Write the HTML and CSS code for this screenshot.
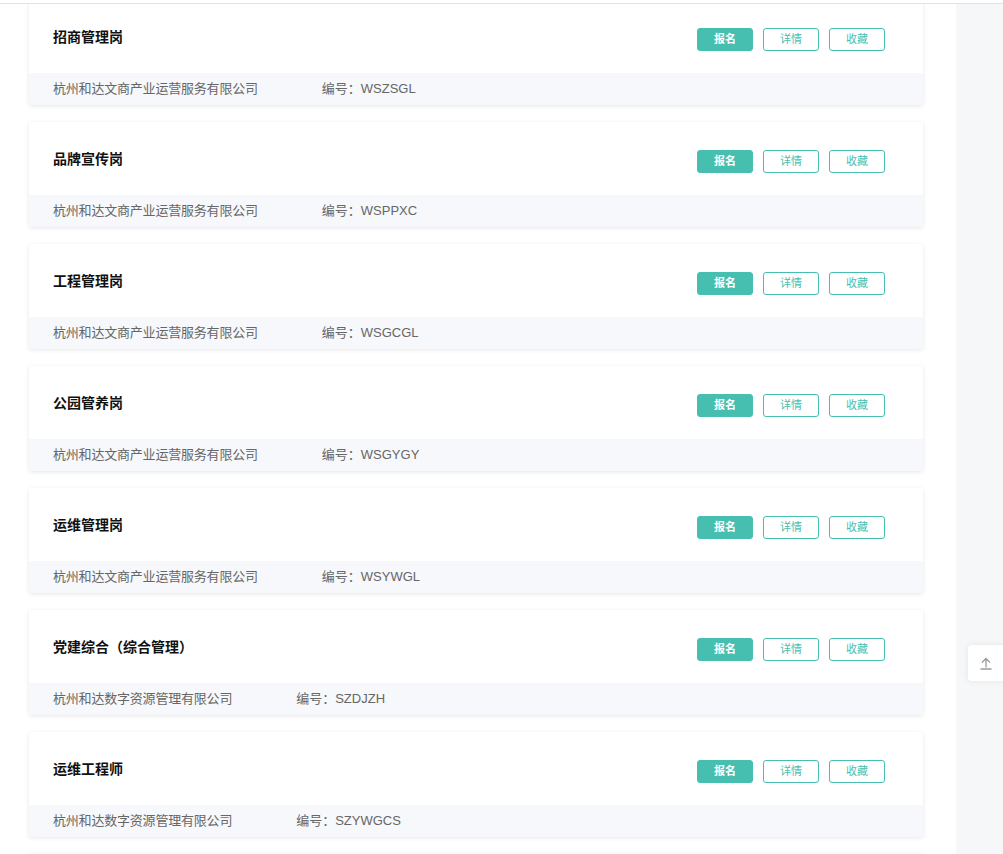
FILE: index.html
```html
<!DOCTYPE html>
<html lang="zh-CN">
<head>
<meta charset="utf-8">
<title>岗位列表</title>
<link rel="stylesheet" href="styles.css">
</head>
<body>
<div class="topbar"></div>
<div class="page">
  <main class="list">
    <div class="card">
      <div class="card-head">
        <div class="title">招商管理岗</div>
        <div class="actions"><button class="btn primary">报名</button><button class="btn">详情</button><button class="btn">收藏</button></div>
      </div>
      <div class="card-foot"><span class="company">杭州和达文商产业运营服务有限公司</span><span class="code">编号：WSZSGL</span></div>
    </div>
    <div class="card">
      <div class="card-head">
        <div class="title">品牌宣传岗</div>
        <div class="actions"><button class="btn primary">报名</button><button class="btn">详情</button><button class="btn">收藏</button></div>
      </div>
      <div class="card-foot"><span class="company">杭州和达文商产业运营服务有限公司</span><span class="code">编号：WSPPXC</span></div>
    </div>
    <div class="card">
      <div class="card-head">
        <div class="title">工程管理岗</div>
        <div class="actions"><button class="btn primary">报名</button><button class="btn">详情</button><button class="btn">收藏</button></div>
      </div>
      <div class="card-foot"><span class="company">杭州和达文商产业运营服务有限公司</span><span class="code">编号：WSGCGL</span></div>
    </div>
    <div class="card">
      <div class="card-head">
        <div class="title">公园管养岗</div>
        <div class="actions"><button class="btn primary">报名</button><button class="btn">详情</button><button class="btn">收藏</button></div>
      </div>
      <div class="card-foot"><span class="company">杭州和达文商产业运营服务有限公司</span><span class="code">编号：WSGYGY</span></div>
    </div>
    <div class="card">
      <div class="card-head">
        <div class="title">运维管理岗</div>
        <div class="actions"><button class="btn primary">报名</button><button class="btn">详情</button><button class="btn">收藏</button></div>
      </div>
      <div class="card-foot"><span class="company">杭州和达文商产业运营服务有限公司</span><span class="code">编号：WSYWGL</span></div>
    </div>
    <div class="card">
      <div class="card-head">
        <div class="title">党建综合（综合管理）</div>
        <div class="actions"><button class="btn primary">报名</button><button class="btn">详情</button><button class="btn">收藏</button></div>
      </div>
      <div class="card-foot"><span class="company">杭州和达数字资源管理有限公司</span><span class="code">编号：SZDJZH</span></div>
    </div>
    <div class="card">
      <div class="card-head">
        <div class="title">运维工程师</div>
        <div class="actions"><button class="btn primary">报名</button><button class="btn">详情</button><button class="btn">收藏</button></div>
      </div>
      <div class="card-foot"><span class="company">杭州和达数字资源管理有限公司</span><span class="code">编号：SZYWGCS</span></div>
    </div>
    <div class="card card-stub"></div>
  </main>
  <aside class="side"></aside>
</div>
<div class="backtop">
  <svg width="14" height="14" viewBox="0 0 14 14" fill="none" stroke="#9a9a9a" stroke-width="1.3">
    <path d="M7 11.5V2.5M3 6.5L7 2.5L11 6.5M1.5 13H12.5"/>
  </svg>
</div>
</body>
</html>
```
FILE: styles.css
```css
html, body {
  margin: 0;
  padding: 0;
  height: 854px;
  overflow: hidden;
  background: #ffffff;
  font-family: "Liberation Sans", "Noto Sans CJK SC", sans-serif;
}

.topbar {
  position: fixed;
  top: 0;
  left: 0;
  right: 0;
  height: 3px;
  background: #ffffff;
  border-bottom: 1px solid #e2e2e2;
  z-index: 10;
}

.page {
  display: flex;
  min-height: 854px;
}

.list {
  width: 956px;
  flex: none;
  padding: 0 33px 0 29px;
  box-sizing: border-box;
}

.side {
  flex: 1;
  background: #f6f7f9;
}

.card {
  background: #ffffff;
  border-radius: 3px;
  box-shadow: 0 1px 4px rgba(0, 0, 0, 0.1);
  margin-bottom: 17px;
  overflow: hidden;
}

.card-stub {
  height: 60px;
}

.card-head {
  height: 73px;
  display: flex;
  align-items: center;
  justify-content: space-between;
  padding: 0 38px 0 24px;
}

.title {
  font-size: 14px;
  font-weight: bold;
  color: #111111;
  margin-top: -1px;
}

.actions {
  display: flex;
  gap: 10px;
  margin-top: 6px;
}

.btn {
  width: 56px;
  height: 23px;
  box-sizing: border-box;
  border: 1px solid #46bfb0;
  border-radius: 3px;
  background: #ffffff;
  color: #46bfb0;
  font-size: 11px;
  font-family: "Liberation Sans", "Noto Sans CJK SC", sans-serif;
  padding: 0;
  line-height: 21px;
}

.btn.primary {
  background: #46bfb0;
  color: #ffffff;
  font-weight: bold;
}

.card-foot {
  height: 32px;
  box-sizing: border-box;
  padding: 0 0 3px 24px;
  background: #f6f8fb;
  display: flex;
  align-items: center;
  font-size: 13px;
  letter-spacing: -0.2px;
  color: #666666;
}

.code {
  margin-left: 64px;
  letter-spacing: 0;
}

.backtop {
  position: fixed;
  left: 968px;
  top: 645px;
  width: 40px;
  height: 36px;
  background: #ffffff;
  border-radius: 4px;
  box-shadow: 0 0 6px rgba(0, 0, 0, 0.08);
  display: flex;
  align-items: center;
  padding-left: 11px;
  box-sizing: border-box;
}
```
